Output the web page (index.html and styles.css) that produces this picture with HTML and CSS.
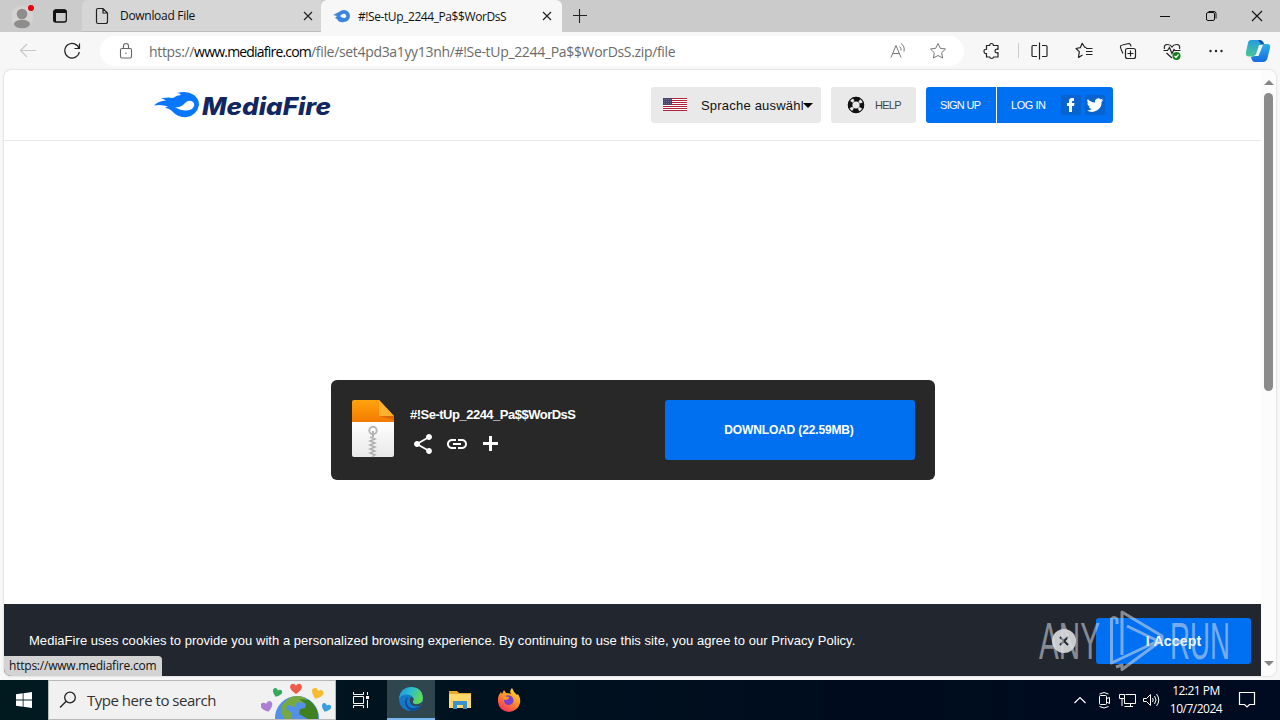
FILE: index.html
```html
<!DOCTYPE html>
<html lang="en">
<head>
    <meta charset="UTF-8">
    <meta name="viewport" content="width=device-width, initial-scale=1.0">
    <title>#!Se-tUp_2244_Pa$$WorDsS</title>

    <link rel="stylesheet" href="styles.css">
</head>
<body>

    <div class="tabs">
        <div class="tabs-left">
            <svg class="avatar" width="24" height="28" viewBox="0 0 24 28">
                <circle cx="10" cy="15" r="11" fill="#d6d4d2"/>
                <circle cx="10" cy="12" r="5.3" fill="#8f8d8b"/>
                <ellipse cx="10" cy="22" rx="8" ry="4.2" fill="#8f8d8b"/>
                <circle cx="19" cy="6" r="3" fill="#e3000f"/>
            </svg>
            <svg class="workspaces" width="16" height="16" viewBox="0 0 16 16">
                <rect x="1.7" y="2" width="12.6" height="12" rx="2" fill="none" stroke="#111" stroke-width="1.3"/>
                <path d="M1.5 5V3.500Q1.500 1.500 3.500 1.500H12.500Q14.500 1.500 14.500 3.500V5H4V14Q1.500 13.500 1.500 11.500Z" fill="#111"/>
            </svg>
        </div>
        <div class="tab">
            <svg width="14" height="18" viewBox="0 0 14 18" fill="none" stroke="#222" stroke-width="1.2">
                <path d="M3 1.500H8L12.500 6V14.500Q12.500 16.500 10.500 16.500H3Q1.500 16.500 1.500 15V3Q1.500 1.500 3 1.500ZM8 1.500V6H12.500"/>
            </svg>
            <span class="tab-title first-title">Download File</span>
            <svg class="tab-close" width="10" height="10" viewBox="0 0 10 10" stroke="#222" stroke-width="1.2"><path d="M1 1L9 9M9 1L1 9"/></svg>
        </div>
        <div class="tab active">
            <svg width="18" height="14" viewBox="0 0 18 14">
                <path d="M1 6L7 3Q9 1 12 1A5.500 5.500 0 0 1 12 13Q7 14 5 10L3 9L5 7Z" fill="#3b86dc"/>
                <path d="M8 7Q12 3 14 6Q15 9 12 9Q10 9 8 7Z" fill="#f7f7f7"/>
            </svg>
            <span class="tab-title">#!Se-tUp_2244_Pa$$WorDsS</span>
            <svg class="tab-close" width="10" height="10" viewBox="0 0 10 10" stroke="#222" stroke-width="1.2"><path d="M1 1L9 9M9 1L1 9"/></svg>
        </div>
        <svg class="new-tab" width="14" height="14" viewBox="0 0 14 14" stroke="#222" stroke-width="1.100"><path d="M0 6.500H14M6.500 0V14"/></svg>
        <div class="window-buttons">
            <svg width="46" height="32" viewBox="0 0 46 32" stroke="#111"><path d="M18 16.500H28"/></svg>
            <svg width="46" height="32" viewBox="0 0 46 32" fill="none" stroke="#111"><rect x="18.500" y="12.500" width="8" height="8" rx="1.500"/><path d="M20.500 11.500H26Q28 11.500 28 13.500V18.500"/></svg>
            <svg width="46" height="32" viewBox="0 0 46 32" stroke="#111" stroke-width="1.100"><path d="M18 11L28 21M28 11L18 21"/></svg>
        </div>
    </div>

    <div class="toolbar">
        <div class="nav-buttons">
            <svg width="44" height="38" viewBox="0 0 44 38" fill="none" stroke="#c6c6c6" stroke-width="1.100"><path d="M30 18.500H14.500M21 12L14.500 18.500L21 25"/></svg>
            <svg width="44" height="38" viewBox="0 0 44 38" fill="none" stroke="#222" stroke-width="1.200"><path d="M29.200 17A7.300 7.300 0 1 0 29.300 20M29.500 11.500V16.500H24.500"/></svg>
        </div>
        <div class="address">
            <svg width="14" height="18" viewBox="0 0 14 18" fill="none" stroke="#666" stroke-width="1.100"><rect x="1.500" y="6.500" width="11" height="9.500" rx="1.500"/><path d="M4.500 6.500V4A2.500 2.500 0 0 1 9.500 4V6.500"/><circle cx="7" cy="11.200" r=".7" fill="#666" stroke="none"/></svg>
            <span class="url">https://<b>www.mediafire.com</b>/file/set4pd3a1yy13nh/#!Se-tUp_2244_Pa$$WorDsS.zip/file</span>
            <svg class="read-aloud" width="18" height="18" viewBox="0 0 18 18" fill="none" stroke="#777"><path d="M2 15.500L7 3.500L12 15.500M4 11.500H10.300M10.500 4.500Q12.500 6 12 8.500M12 1.500Q16 4 15 9.500"/></svg>
            <svg class="star" width="18" height="18" viewBox="0 0 18 18" fill="none" stroke="#777" stroke-linejoin="round"><path d="M9 1.500L11.300 6.300L16.500 7L12.700 10.700L13.600 16L9 13.500L4.400 16L5.300 10.700L1.500 7L6.700 6.300Z"/></svg>
        </div>
        <div class="actions">
            <svg width="44" height="38" viewBox="0 0 44 38" fill="none" stroke="#222" stroke-width="1.200"><path d="M17.500 13.500H20.700Q20.700 11.500 22.500 11.500Q24.400 11.500 24.400 13.500H29V17.300Q26 16.800 26 19Q26 21.200 29 20.700V25H24.500Q24.500 26.500 22.700 26.500Q20.800 26.500 20.800 25H17.500V21.500Q15 21.800 15 19.300Q15 17 17.500 17.300Z" stroke-linejoin="round"/></svg>
            <svg class="split" width="44" height="38" viewBox="0 0 44 38" fill="none" stroke="#222" stroke-width="1.200"><path d="M19 13.500H15Q14 13.500 14 14.500V23.500Q14 24.500 15 24.500H19M24 13.500H28Q29 13.500 29 14.500V23.500Q29 24.500 28 24.500H24M21.500 10.500V27.500"/></svg>
            <svg width="44" height="38" viewBox="0 0 44 38" fill="none" stroke="#222" stroke-width="1.200"><path d="M24.500 15.500L22.700 15.200L20.200 11.300L18.300 15.700L14 16.500L17.300 19.600L16.500 25.500L20.500 23M24 16.500H30.500M24 19.500H30.500M24 22.500H30.500" stroke-linejoin="round"/></svg>
            <svg width="44" height="38" viewBox="0 0 44 38" fill="none" stroke="#222" stroke-width="1.200"><rect x="19.500" y="16.500" width="10" height="10" rx="2"/><path d="M24.500 18.500V24.500M21.500 21.500H27.500M17 21.500Q14 15.500 14.500 14Q15 13 23 11.500Q24.500 11.500 25 14.500"/></svg>
            <svg width="44" height="38" viewBox="0 0 44 38" fill="none" stroke="#222" stroke-width="1.200"><path d="M14.500 17Q13.500 12.500 17.500 12.500Q20.500 12.500 22 15Q23.500 12.500 26.500 12.500Q30.500 12.500 29.500 17M16.500 21L22 26M13.500 18.500H17.500L19.500 15.500L22 21.500L24 17.500L25 18.500H30.500"/><circle cx="26.500" cy="24" r="4" fill="#13811b" stroke="none"/><path d="M24.500 24L26 25.500L28.500 22.500" stroke="#fff"/></svg>
            <svg width="44" height="38" viewBox="0 0 44 38" fill="#222"><circle cx="16.500" cy="19" r="1.200"/><circle cx="22" cy="19" r="1.200"/><circle cx="27.500" cy="19" r="1.200"/></svg>
            <svg width="40" height="38" viewBox="0 0 40 38">
                <defs>
                    <linearGradient id="copilotA" x1="0" y1="0" x2="0" y2="1"><stop offset="0" stop-color="#249de0"/><stop offset="1" stop-color="#4cc795"/></linearGradient>
                    <linearGradient id="copilotB" x1="0" y1="0" x2="0" y2="1"><stop offset="0" stop-color="#35bde9"/><stop offset="1" stop-color="#176be0"/></linearGradient>
                </defs>
                <path d="M22 8Q25 8 26 12H29Q33 12 32 16L29.500 26Q28.500 30 25 30H17Q14 30 13 25L20 22Z" fill="url(#copilotB)"/>
                <path d="M13 8H22Q24 8 23.500 10L20 21Q19 24.500 16 24.500H11Q7 24.500 8 20L10 11Q10.500 8 13 8Z" fill="url(#copilotA)"/>
                <path d="M21 13H25L20.500 24H16Q18 23.500 18.500 21Z" fill="#f3faff"/>
                <path d="M20 8Q25 8 26 12H23Z" fill="#1648a8"/>
            </svg>
        </div>
    </div>

    <div class="viewport">
        <div class="page">
            <div class="header">
                <svg class="logo" width="184" height="32" viewBox="0 0 184 32">
                    <path d="M0 15.500Q4 11 12 10.500Q11 9.500 7 8.500Q14 7 19 8Q23 5 27 5Q26 3 23 3Q33 0 40 5Q45 9 45 15Q43 25 33 27Q24 28 19 22Q15 18 11 18Q12 17 14 16.500Q7 14 0 15.500Z" fill="#0877ff"/>
                    <path d="M21 17Q27 18 31 13Q35 9 39 12Q42 15 38 19Q30 23 21 17Z" fill="#fff"/>
                    <text class="logo-text" x="48" y="25" textLength="129" lengthAdjust="spacingAndGlyphs">MediaFire</text>
                </svg>
                <div class="language">
                    <svg class="flag" width="24" height="13" viewBox="0 0 24 13" fill="none">
                        <path d="M0 0H24V13H0Z" fill="#fff"/>
                        <path d="M0 .5H24M0 2.500H24M0 4.500H24M0 6.500H24M0 8.500H24M0 10.500H24M0 12.500H24" stroke="#b22339"/>
                        <path d="M0 0H9V7H0Z" fill="#45456e"/>
                        <path d="M1 1.500H9M1 3.500H9M1 5.500H9" stroke="#77779a" stroke-width=".8" stroke-dasharray="1 1"/>
                    </svg>
                    <span class="language-name">Sprache auswählen</span>
                    <span class="caret"></span>
                </div>
                <div class="help">
                    <svg width="18" height="18" viewBox="0 0 18 18"><circle cx="9" cy="9" r="8.200" fill="#111"/><circle cx="9" cy="9" r="5.700" fill="none" stroke="#e9e9e9" stroke-width="3.500" stroke-dasharray="3 5.953" stroke-dashoffset="-2.970"/><circle cx="9" cy="9" r="7.700" fill="none" stroke="#111"/><circle cx="9" cy="9" r="3.600" fill="#e9e9e9"/></svg>
                    <span>HELP</span>
                </div>
                <div class="account">
                    <span class="signup">SIGN UP</span>
                    <span class="login">LOG IN</span>
                    <span class="social"><svg width="20" height="20" viewBox="0 0 20 20"><path d="M8 17V11H6V8H8V6Q8 3 11 3H13V6H11.500Q11 6 11 7V8H13.500L13 11H11V17Z" fill="#fff"/></svg></span>
                    <span class="social"><svg width="20" height="20" viewBox="0 0 24 24"><path d="M22 5.900c-.7.3-1.500.5-2.300.6.8-.5 1.500-1.300 1.800-2.200-.8.500-1.700.8-2.600 1a4.100 4.100 0 0 0-7 3.700C8.500 8.800 5.500 7.200 3.400 4.700a4.100 4.100 0 0 0 1.300 5.500c-.7 0-1.300-.2-1.900-.5 0 2 1.400 3.700 3.300 4.100-.6.200-1.200.2-1.800.1a4.100 4.100 0 0 0 3.800 2.800A8.200 8.200 0 0 1 2 18.400a11.600 11.600 0 0 0 17.900-10.300c.8-.6 1.500-1.300 2.100-2.200z" fill="#fff"/></svg></span>
                </div>
            </div>

            <div class="download-box">
                <svg class="zip" width="42" height="58" viewBox="0 0 42 58">
                    <defs>
                        <linearGradient id="zipTop" x1="0" y1="0" x2="0" y2="1"><stop offset="0" stop-color="#ffa30e"/><stop offset="1" stop-color="#f47a00"/></linearGradient>
                        <linearGradient id="zipPaper" x1="0" y1="0" x2="0" y2="1"><stop offset="0" stop-color="#fff"/><stop offset="1" stop-color="#e8e8e8"/></linearGradient>
                    </defs>
                    <path d="M0 22H42V55Q42 57 40 57H2Q0 57 0 55Z" fill="url(#zipPaper)"/>
                    <path d="M2 0H27L42 16V22H0V2Q0 0 2 0Z" fill="url(#zipTop)"/>
                    <path d="M27 0L42 16H27Z" fill="#ffb02e"/>
                    <path d="M27 16H42V20Z" fill="#df6700"/>
                    <circle cx="21" cy="30.500" r="3.700" fill="#fff" stroke="#b8b8b8" stroke-width="2"/>
                    <path d="M21 31V37" stroke="#b0b0b0" stroke-width="2"/>
                    <path d="M18 37L23 39L18 41L23 43L18 45L23 47L18 49L23 51L18 53L23 55L20 57" fill="none" stroke="#b0b0b0" stroke-width="1.500"/>
                </svg>
                <div class="file-info">
                    <div class="file-name">#!Se-tUp_2244_Pa$$WorDsS</div>
                    <div class="file-actions">
                        <svg width="24" height="24" viewBox="0 0 24 24" fill="#fff"><path d="M18 16.080c-.76 0-1.440.3-1.960.77L8.910 12.700c.05-.23.09-.46.09-.7s-.04-.47-.09-.7l7.050-4.110c.54.5 1.250.81 2.040.81 1.660 0 3-1.340 3-3s-1.340-3-3-3-3 1.340-3 3c0 .24.04.47.09.7L8.040 9.810C7.500 9.310 6.790 9 6 9c-1.660 0-3 1.340-3 3s1.340 3 3 3c.79 0 1.500-.31 2.040-.81l7.120 4.160c-.05.21-.08.43-.08.65 0 1.610 1.310 2.920 2.920 2.920s2.920-1.310 2.920-2.920-1.310-2.920-2.920-2.920z"/></svg>
                        <svg width="24" height="24" viewBox="0 0 24 24" fill="#fff"><path d="M3.900 12c0-1.710 1.390-3.100 3.100-3.100h4V7H7c-2.760 0-5 2.240-5 5s2.240 5 5 5h4v-1.900H7c-1.710 0-3.100-1.390-3.100-3.100zM8 13h8v-2H8v2zm9-6h-4v1.900h4c1.710 0 3.100 1.390 3.100 3.100s-1.390 3.100-3.100 3.100h-4V17h4c2.760 0 5-2.240 5-5s-2.240-5-5-5z"/></svg>
                        <svg width="24" height="24" viewBox="0 0 24 24" stroke="#fff" stroke-width="3"><path d="M4 11.500H19M11.500 4V19"/></svg>
                    </div>
                </div>
                <div class="download-button">DOWNLOAD (22.59MB)</div>
            </div>

            <div class="cookies">
                <span class="cookie-text">MediaFire uses cookies to provide you with a personalized browsing experience. By continuing to use this site, you agree to our Privacy Policy.</span>
                <svg class="dismiss" width="24" height="24" viewBox="0 0 24 24"><circle cx="12" cy="12" r="12" fill="#cacbcc"/><path d="M8 8L16 16M16 8L8 16" stroke="#23282f" stroke-width="2"/></svg>
                <div class="accept">I Accept</div>
            </div>
        </div>
        <div class="scrollbar">
            <span class="arrow-up"></span>
            <span class="thumb"></span>
            <span class="arrow-down"></span>
        </div>
        <div class="status">https://www.mediafire.com</div>
        <svg class="watermark" width="210" height="66" viewBox="0 0 210 66">
            <text x="1" y="50" textLength="61" lengthAdjust="spacingAndGlyphs">ANY</text>
            <text x="132" y="50" textLength="60" lengthAdjust="spacingAndGlyphs">RUN</text>
            <path d="M79 15V10Q76 7 73.500 10V54L120 32L89 17M84 46V3L124 27V31L84 60.500V56L78 58" fill="none" stroke="#d8dde5" stroke-width="3" stroke-linejoin="round"/>
        </svg>
    </div>

    <div class="taskbar">
        <div class="start"><svg width="16" height="16" viewBox="0 0 16 16" fill="#fff"><path d="M0 2.200L6.700 1.300V7.600H0ZM7.500 1.200L16 0V7.600H7.500ZM0 8.400H6.700V14.700L0 13.800ZM7.500 8.400H16V16L7.500 14.800Z"/></svg></div>
        <div class="search">
            <svg width="18" height="18" viewBox="0 0 18 18" fill="none" stroke="#222" stroke-width="1.300"><circle cx="11" cy="6.500" r="5.300"/><path d="M7.200 10.300L1 16.500"/></svg>
            <span>Type here to search</span>
            <svg class="earth" width="74" height="38" viewBox="0 0 74 38">
                <defs><path id="heart" d="M0 5Q-6 1-6-2.500Q-5-6-2-5Q0-4 0-3Q0-4 2-5Q5-6 6-2.500Q6 1 0 5Z"/></defs>
                <circle cx="36" cy="37" r="22" fill="#5390e8"/>
                <path d="M28 17Q36 13 45 17L43 22L36 21L34 26L27 24L25 28L31 32L30 38H24L20 32L21 24Z" fill="#77a942"/>
                <path d="M38 18L48 19Q58 27 57 38H47L38 33L39 28L44 27L45 23Z" fill="#3f8020"/>
                <use href="#heart" transform="translate(35 8)" fill="#ef5c49"/>
                <use href="#heart" transform="translate(16 12) rotate(20) scale(.8)" fill="#35a85c"/>
                <use href="#heart" transform="translate(56 13) rotate(20)" fill="#f5bc30"/>
                <use href="#heart" transform="translate(6 26) rotate(-15)" fill="#ad7fd3"/>
                <use href="#heart" transform="translate(65 27) rotate(20) scale(.8)" fill="#399ee1"/>
            </svg>
        </div>
        <div class="task"><svg width="18" height="18" viewBox="0 0 18 18" fill="none" stroke="#fff"><path d="M1.500 1V3.500H11.500V1M1.500 17V14.500H11.500V17M1.500 5.500H11.500V12.500H1.500ZM15.500 1V4M15.500 9V17"/><path d="M15.500 5V8" stroke-width="3"/></svg></div>
        <div class="task current"><svg width="24" height="24" viewBox="0 0 24 24">
            <defs><linearGradient id="edge" x1="0" y1="0" x2="1" y2=".4"><stop offset="0" stop-color="#248bd6"/><stop offset=".5" stop-color="#2bbdd0"/><stop offset="1" stop-color="#61d957"/></linearGradient></defs>
            <circle cx="12" cy="12" r="12" fill="#1479c9"/>
            <path d="M0 11Q2 0 12 0Q23 0 24 11Q24 17 17 17Q13 17 14 14Q16 10 11 8Q5 6 0 11Z" fill="url(#edge)"/>
            <path d="M9 10Q5 19 13 21Q18 22 22 18Q19 24 12 24Q5 20 6 14Q7 11 9 10Z" fill="#104e9c"/>
            <path d="M12 10Q16 11 14 14Q13 17 17 17.500Q22 17 23.500 14Q23 17 22 18.500Q13 21 11 15Q10 12 12 10Z" fill="#344850"/>
        </svg></div>
        <div class="task"><svg width="22" height="20" viewBox="0 0 22 20"><path d="M0 1H8L10 3H22V18H0Z" fill="#e9a82e"/><path d="M0 4H22V18H0Z" fill="#ffd869"/><path d="M4 19V11H18V19H14V15H8V19Z" fill="#3a91d0"/></svg></div>
        <div class="task"><svg width="24" height="24" viewBox="0 0 24 24">
            <defs><linearGradient id="fox" x1=".8" y1="0" x2=".2" y2="1"><stop offset="0" stop-color="#ffe52e"/><stop offset=".5" stop-color="#ff8a28"/><stop offset="1" stop-color="#f52768"/></linearGradient></defs>
            <path d="M1 10Q2 6 4 4L5 6L7 2L9 5Q12 5 14 6Q12 3 15 0Q17 5 20 7L21 6Q24 11 23 15Q21 23 12 24Q2 23 1 14Z" fill="url(#fox)"/>
            <path d="M8 8Q14 6 16 10Q18 16 12 17Q7 17 7 12L11 10Z" fill="#7740cf"/>
            <path d="M5 8L12 9Q12 12 8 12Z" fill="#ff9a25"/>
        </svg></div>
        <div class="tray">
            <svg width="24" height="40" viewBox="0 0 24 40" fill="none" stroke="#fff" stroke-width="1.200"><path d="M6.500 23L12 17.500L17.500 23"/></svg>
            <svg width="24" height="40" viewBox="0 0 24 40" fill="none" stroke="#fff"><rect x="7.500" y="15.500" width="7" height="9" rx="1"/><path d="M14.500 18.500L17.500 17.500V23.500L14.500 22M7.500 14Q12 11 16.500 14M7.500 26.500Q12 29.500 16.500 26.500"/></svg>
            <svg width="24" height="40" viewBox="0 0 24 40" fill="none" stroke="#fff"><path d="M9.500 14.500H19.500V23.500H8.500V19M3.500 14.500H8.500V18.500H3.500ZM6 18.500V26M14.500 23.500V26.500M8.500 26.500H17"/></svg>
            <svg width="24" height="40" viewBox="0 0 24 40" fill="none" stroke="#fff"><path d="M3.500 18.500H6.500L10.500 14.500V25.500L6.500 21.500H3.500ZM12.500 18Q14 20 12.500 22M14.500 16Q17.500 20 14.500 24M16.500 14Q21 20 16.500 26"/></svg>
        </div>
        <div class="clock"><span>12:21 PM</span><span>10/7/2024</span></div>
        <svg class="notification" width="18" height="18" viewBox="0 0 18 18" fill="none" stroke="#fff" stroke-width="1.200"><path d="M1.500 1.500H16.500V13.500H11.500L9 16L6.500 13.500H1.500Z"/></svg>
    </div>

</body>
</html>
```
FILE: styles.css
```css
* {
    box-sizing: border-box;
}

body {
    margin: 0;
    width: 1280px;
    height: 720px;
    overflow: hidden;
    display: flex;
    flex-direction: column;
    background-color: #f7f7f7;
    font-family: "Liberation Sans", Arial, sans-serif;
    white-space: nowrap;
}

svg {
    display: block;
    flex-shrink: 0;
}

.tabs {
    height: 32px;
    background-color: #cbcbcb;
    display: flex;
    align-items: center;
    flex-shrink: 0;
    font-family: "Open Sans", sans-serif;
}

.tabs-left {
    width: 82px;
    height: 32px;
    display: flex;
    align-items: center;
}

.avatar {
    margin-left: 12px;
}

.workspaces {
    margin-left: 16px;
}

.tab {
    width: 239px;
    height: 32px;
    padding: 0 8px 0 13px;
    display: flex;
    align-items: center;
    background-color: #d6d6d6;
    border-bottom: 1px solid #bdbdbd;
    border-radius: 6px 0 0 0;
}

.tab.active {
    width: 241px;
    padding: 0 10px 0 11px;
    background-color: #f7f7f7;
    border-bottom: none;
    border-radius: 6px 6px 0 0;
}

.tab-title {
    margin-left: 8px;
    font-size: 12px;
    letter-spacing: -0.42px;
    color: #111;
}

.first-title {
    margin-left: 11px;
    letter-spacing: -0.3px;
}

.tab-close {
    margin-left: auto;
}

.new-tab {
    margin-left: 11px;
}

.window-buttons {
    display: flex;
    margin-left: auto;
}

.toolbar {
    height: 38px;
    background-color: #f7f7f7;
    display: flex;
    flex-shrink: 0;
}

.nav-buttons {
    display: flex;
    width: 100px;
    padding-left: 6px;
}

.address {
    width: 864px;
    height: 30px;
    margin-top: 4px;
    padding: 0 17px 0 19px;
    display: flex;
    align-items: center;
    background-color: #fff;
    border-radius: 15px;
}

.url {
    margin-left: 16px;
    font-family: "Open Sans", sans-serif;
    font-size: 14px;
    letter-spacing: -0.33px;
    color: #6b6b6b;
}

.url b {
    font-weight: normal;
    letter-spacing: -0.8px;
    color: #000;
}

.read-aloud {
    margin-left: auto;
}

.star {
    margin-left: 22px;
}

.actions {
    display: flex;
    margin-left: 5px;
}

.split {
    margin-left: 5px;
    background: linear-gradient(#ccc, #ccc) 0 11px / 1px 15px no-repeat;
}

.viewport {
    position: relative;
    width: 1272px;
    height: 606px;
    margin: 0 4px 4px;
    display: flex;
    flex-shrink: 0;
    background-color: #fff;
    border-radius: 7px;
    box-shadow: 0 0 2px #bbb;
}

.page {
    width: 1257px;
    display: flex;
    flex-direction: column;
}

.header {
    height: 71px;
    padding: 17px 148px 0 150px;
    display: flex;
    flex-shrink: 0;
    border-bottom: 1px solid #e8e8e8;
}

.logo {
    margin-top: 3px;
}

.logo-text {
    font-family: Inter, sans-serif;
    font-size: 24px;
    font-weight: 800;
    font-style: italic;
    fill: #122661;
}

.language,
.help {
    height: 36px;
    display: flex;
    align-items: center;
    background-color: #e9e9e9;
    border-radius: 3px;
}

.language {
    width: 170px;
    margin-left: auto;
    padding-left: 12px;
    font-size: 13px;
    color: #111;
}

.flag {
    margin-bottom: 1px;
}

.language-name {
    width: 102px;
    margin-left: 14px;
    overflow: hidden;
    letter-spacing: 0.2px;
}

.caret {
    border: 5px solid transparent;
    border-top-color: #000;
    border-bottom: none;
}

.help {
    width: 85px;
    margin-left: 10px;
    padding-left: 16px;
    font-size: 11px;
    letter-spacing: -0.75px;
    color: #444;
}

.help span {
    margin-left: 10px;
}

.account {
    width: 187px;
    height: 36px;
    margin-left: 10px;
    display: flex;
    align-items: center;
    background-color: #0070f3;
    border-radius: 3px;
    font-size: 11px;
    color: #fff;
}

.signup {
    width: 71px;
    line-height: 36px;
    padding-left: 14px;
    border-right: 1px solid #fff;
    letter-spacing: -0.7px;
}

.login {
    width: 64px;
    padding-left: 14px;
    letter-spacing: -0.45px;
}

.social {
    margin-right: 4px;
    background-color: #0863ce;
    border-radius: 2px;
}

.download-box {
    width: 604px;
    height: 100px;
    margin: 239px 0 0 327px;
    padding: 20px;
    display: flex;
    flex-shrink: 0;
    background-color: #282828;
    border-radius: 6px;
}

.zip {
    margin-left: 1px;
}

.file-info {
    margin: 6px 0 0 16px;
    color: #fff;
}

.file-name {
    height: 26px;
    font-size: 13px;
    font-weight: bold;
    letter-spacing: -0.5px;
    line-height: 17px;
}

.file-actions {
    display: flex;
    gap: 10px;
    margin-left: 1px;
}

.download-button {
    width: 250px;
    height: 60px;
    margin-left: auto;
    background-color: #0070f0;
    border-radius: 3px;
    font-size: 12px;
    font-weight: bold;
    letter-spacing: -0.15px;
    line-height: 60px;
    text-align: center;
    text-indent: -2px;
    color: #fff;
}

.cookies {
    height: 72px;
    margin-top: auto;
    padding: 0 10px 0 25px;
    display: flex;
    align-items: center;
    background-color: #22272f;
    border-radius: 0 0 0 7px;
    color: #fff;
}

.cookie-text {
    font-size: 13px;
    letter-spacing: 0.04px;
}

.dismiss {
    margin: 2px 0 0 auto;
}

.accept {
    width: 155px;
    height: 46px;
    margin: 2px 0 0 20px;
    background-color: #0070f3;
    border-radius: 3px;
    font-size: 14px;
    font-weight: bold;
    letter-spacing: 0.2px;
    line-height: 46px;
    text-align: center;
}

.scrollbar {
    width: 15px;
    padding: 10px 0 10px 3px;
    display: flex;
    flex-direction: column;
    background-color: #fcfcfc;
    border-radius: 0 7px 7px 0;
}

.arrow-up,
.arrow-down {
    width: 10px;
    border: 5px solid transparent;
}

.arrow-up {
    border-top: none;
    border-bottom-color: #858585;
}

.thumb {
    width: 9px;
    height: 298px;
    margin-top: 8px;
    background-color: #8b8b8b;
    border-radius: 5px;
}

.arrow-down {
    margin-top: auto;
    border-bottom: none;
    border-top-color: #858585;
}

.status {
    position: absolute;
    left: 0;
    bottom: 0;
    width: 158px;
    height: 20px;
    padding-left: 5px;
    background-color: #d3d3d3;
    border-radius: 0 4px 0 7px;
    font-family: "Open Sans", sans-serif;
    font-size: 12px;
    line-height: 20px;
    letter-spacing: -0.22px;
    color: #111;
}

.watermark {
    position: absolute;
    left: 1034px;
    top: 539px;
    opacity: 0.55;
}

.watermark text {
    font-family: "Liberation Sans", sans-serif;
    font-size: 52px;
    fill: #d8dde5;
}

.taskbar {
    height: 40px;
    display: flex;
    align-items: center;
    flex-shrink: 0;
    background: linear-gradient(90deg, #001a20, #000d1e 60%, #000a20);
    color: #fff;
    font-family: "Open Sans", sans-serif;
}

.start {
    width: 48px;
    padding-left: 16px;
}

.search {
    width: 288px;
    height: 40px;
    padding-left: 10px;
    display: flex;
    align-items: center;
    background-color: #f1f1f1;
    border: 1px solid #b9b9b9;
    font-size: 15px;
    letter-spacing: -0.48px;
    color: #333;
}

.search span {
    margin-left: 10px;
}

.earth {
    margin-left: auto;
}

.task {
    width: 49px;
    height: 40px;
    display: flex;
    align-items: center;
    justify-content: center;
}

.task.current {
    width: 48px;
    margin-left: 2px;
    background-color: #30464e;
    border-bottom: 2px solid #79b8ee;
}

.tray {
    margin-left: auto;
    display: flex;
}

.clock {
    width: 64px;
    display: flex;
    flex-direction: column;
    align-items: center;
    font-size: 12px;
    line-height: 18px;
    letter-spacing: -0.5px;
}

.notification {
    margin: 0 24px 0 10px;
}
```
